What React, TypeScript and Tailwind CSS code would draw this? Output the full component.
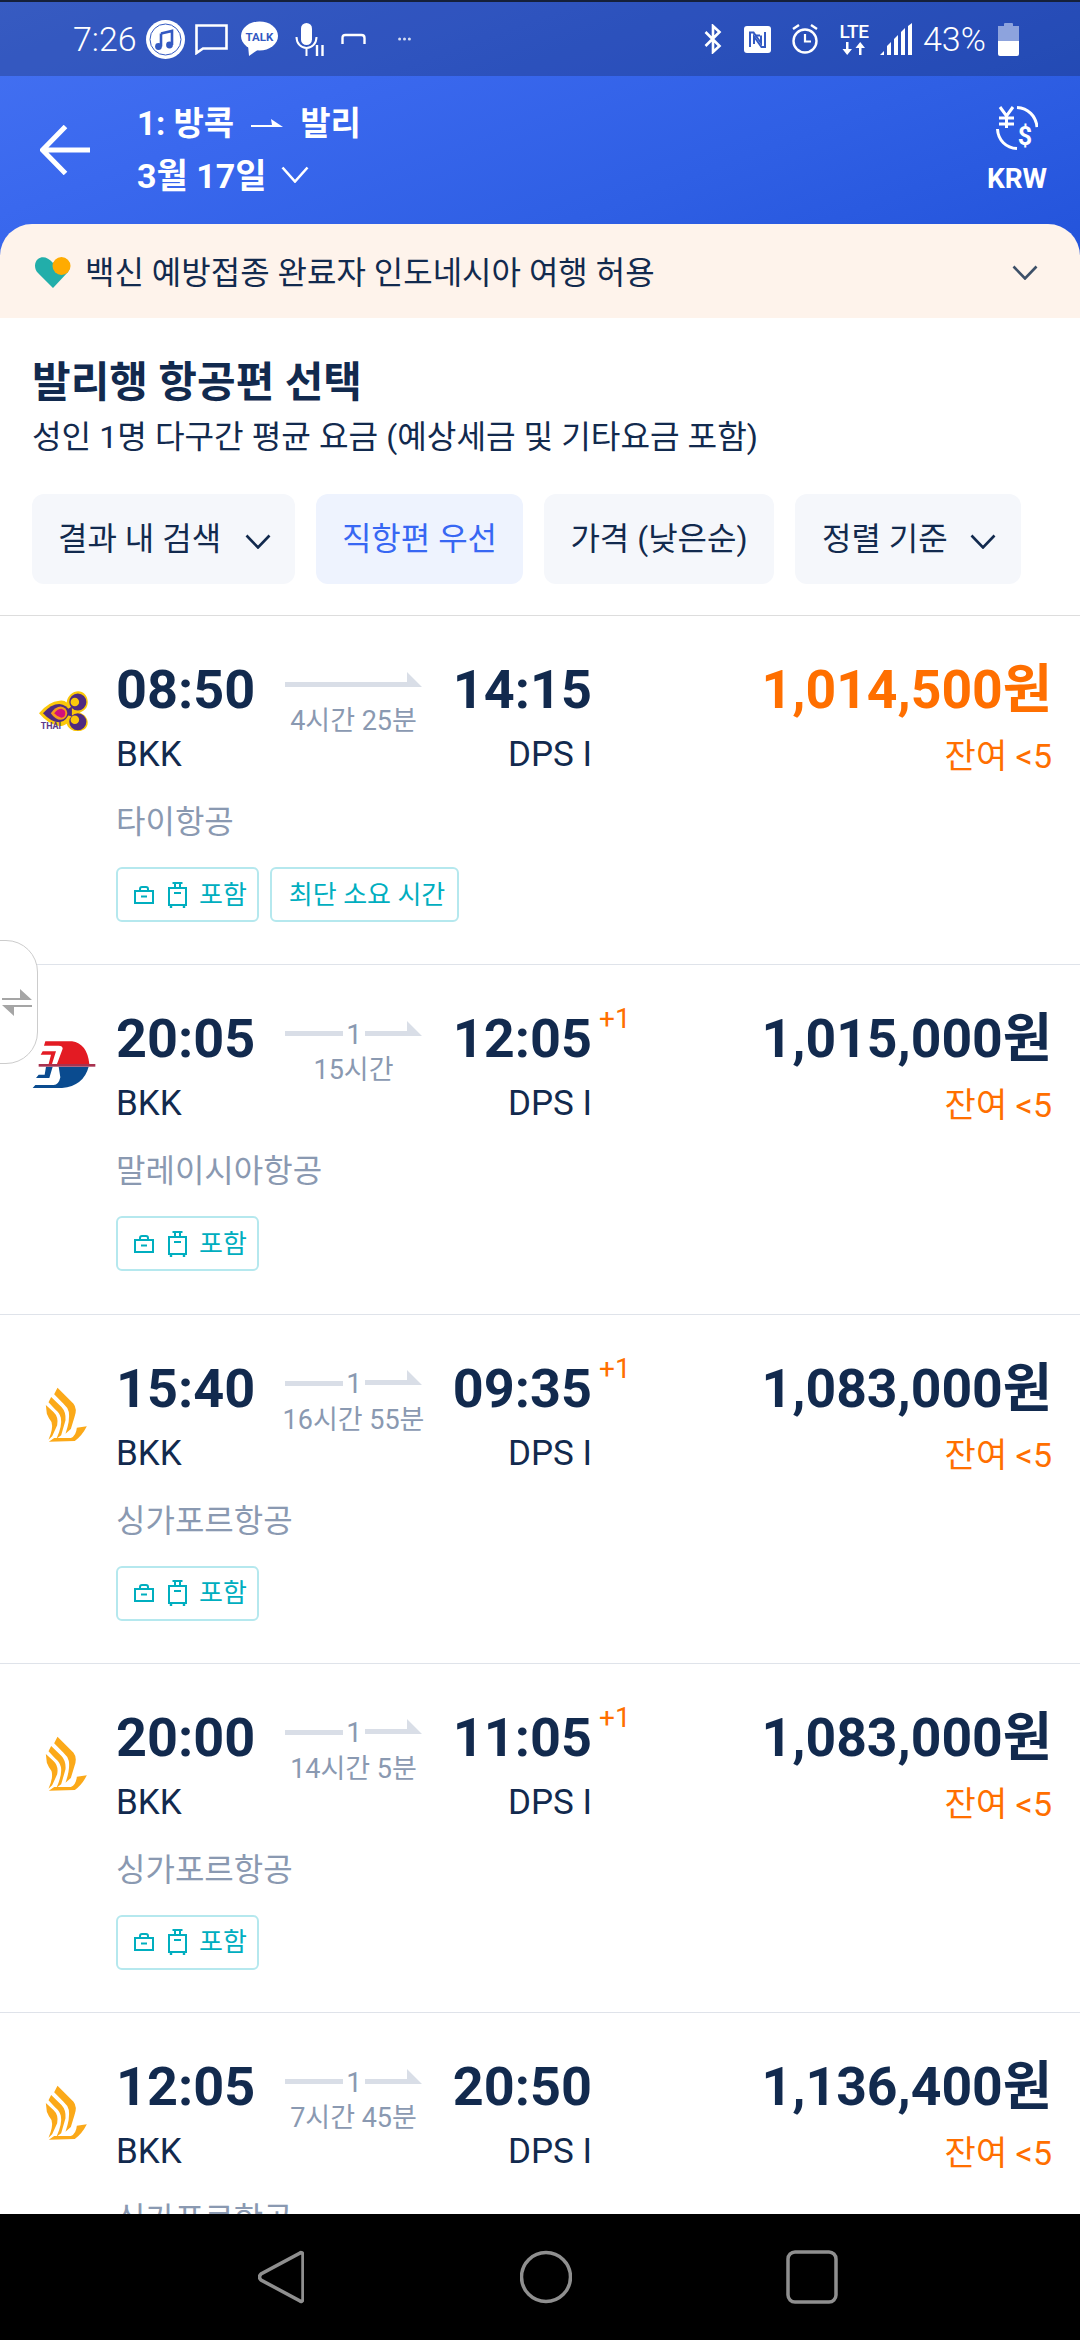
import React from "react";

const Chevron = ({ w = 26, h = 14, color = "#fff", sw = 2.6 }: { w?: number; h?: number; color?: string; sw?: number }) => (
  <svg width={w} height={h} viewBox={`0 0 ${w} ${h}`} fill="none">
    <path d={`M1.5 1.5L${w / 2} ${h - 1.5}L${w - 1.5} 1.5`} stroke={color} strokeWidth={sw} />
  </svg>
);

const Music = () => (
  <svg width="39" height="39" viewBox="0 0 39 39" className="ml-[10px]">
    <circle cx="19.5" cy="19.5" r="19.5" fill="#fff" />
    <circle cx="19.5" cy="19.5" r="15.5" fill="none" stroke="#3359c2" strokeWidth="1" />
    <path d="M15 13.5l11-2.5v14" fill="none" stroke="#3359c2" strokeWidth="2.6" />
    <path d="M15 13.5v13" stroke="#3359c2" strokeWidth="2.6" />
    <circle cx="12.5" cy="26.5" r="3.4" fill="#3359c2" />
    <circle cx="23.5" cy="25" r="3.4" fill="#3359c2" />
  </svg>
);

const Msg = () => (
  <svg width="33" height="31" viewBox="0 0 33 31" className="ml-[10px]" fill="none">
    <path d="M1.5 1.5h30v23H8l-6.5 4.5z" stroke="#fff" strokeWidth="2.6" />
  </svg>
);

const Talk = () => (
  <svg width="37" height="36" viewBox="0 0 37 36" className="ml-[13px]">
    <ellipse cx="18.5" cy="15" rx="18.5" ry="14.5" fill="#fff" />
    <path d="M7 24l1 11 10-7z" fill="#fff" />
    <text x="18.5" y="19.5" textAnchor="middle" fontSize="11.5" fontWeight="700" fill="#3359c2" fontFamily="Roboto">TALK</text>
  </svg>
);

const Mic = () => (
  <svg width="29" height="33" viewBox="0 0 29 33" className="ml-[17px]" fill="none">
    <rect x="6" y="0" width="11" height="22" rx="5.5" fill="#fff" />
    <path d="M1.5 14c0 6.5 4.5 11 10 11s10-4.5 10-11M11.5 25v8" stroke="#fff" strokeWidth="2" />
    <path d="M22 22v11M27.5 22v11" stroke="#fff" strokeWidth="2.4" />
  </svg>
);

const Cast = () => (
  <svg width="25" height="12" viewBox="0 0 25 12" className="ml-[17px]" fill="none">
    <path d="M1.5 11V5q0-3 3-3h16q3 0 3 3v6" stroke="#fff" strokeWidth="2.4" />
  </svg>
);

const Dots = () => (
  <svg width="13" height="4" viewBox="0 0 13 4" className="ml-[32px]" fill="#fff" opacity="0.8">
    <circle cx="1.6" cy="2" r="1.5" />
    <circle cx="6.5" cy="2" r="1.5" />
    <circle cx="11.4" cy="2" r="1.5" />
  </svg>
);

const Bt = () => (
  <svg width="18" height="30" viewBox="0 0 18 30" fill="none">
    <path d="M1.5 8l14 14-6.5 6V2l6.5 6-14 14" stroke="#fff" strokeWidth="2.6" />
  </svg>
);

const Nfc = () => (
  <svg width="27" height="27" viewBox="0 0 27 27" className="ml-[22px]">
    <rect width="27" height="27" rx="3" fill="#fff" />
    <path d="M6 21V6.5h3.5L17 17V9.5" fill="none" stroke="#3359c2" strokeWidth="2" />
    <path d="M11 9.5h5M21 6v15h-3.5L10 10.5V18" fill="none" stroke="#3359c2" strokeWidth="2" />
  </svg>
);

const Alarm = () => (
  <svg width="26" height="30" viewBox="0 0 26 30" className="ml-[21px]" fill="none">
    <circle cx="13" cy="17" r="11.5" stroke="#fff" strokeWidth="2.4" />
    <path d="M13 10v7.5h6" stroke="#fff" strokeWidth="2.2" />
    <path d="M1 5l6-4M25 5l-6-4" stroke="#fff" strokeWidth="2.4" />
  </svg>
);

const Lte = () => (
  <div className="ml-[21px] flex h-[31px] w-[30px] flex-col items-center">
    <span className="h-[15px] text-[19px] font-medium leading-[15px] tracking-[-0.5px] text-white">LTE</span>
    <svg width="26" height="13" viewBox="0 0 26 13" className="mt-[3px]" fill="#fff">
      <path d="M5 0h2.5v7H11l-4.8 6L1.5 7H5zM18 13h2.5V6H24l-4.8-6-4.7 6H18z" />
    </svg>
  </div>
);

const Signal = () => (
  <svg width="33" height="32" viewBox="0 0 33 32" className="ml-[11px]" fill="#fff">
    <path d="M0 32l4-4v4zM7 32v-9l4-4v13zM14 32V16l4-4v20zM21 32V9l4-4v27zM28 32V3l4-3v32z" />
  </svg>
);

const Battery = () => (
  <div className="ml-[13px] flex h-[33px] w-[21px] flex-col items-center">
    <div className="h-[3px] w-[9px] rounded-t-[1px] bg-[#8da3dd]" />
    <div className="h-[15px] w-full bg-[#8da3dd]" />
    <div className="h-[15px] w-full rounded-b-[2px] bg-white" />
  </div>
);

const Currency = () => (
  <svg width="42" height="44" viewBox="0 0 42 44" fill="none">
    <path d="M21 1.5C32 2 40 10 41 21" stroke="#fff" strokeWidth="3" />
    <path d="M1.5 23C2 34 10 42 21 42.5" stroke="#fff" strokeWidth="3" />
    <path d="M4 1l6.5 9L17 1M3 12h15M3 18h15M10.5 10v12" stroke="#fff" strokeWidth="3" />
    <text x="29" y="39" textAnchor="middle" fontSize="25" fontWeight="700" fill="#fff" fontFamily="Roboto">$</text>
  </svg>
);

const Heart = () => (
  <svg width="36" height="31" viewBox="0 0 36 31">
    <path d="M18 31L3 16C-1 12-1 5 3 2c4-3 10-2 15 4 4-5 9-6 13-4 5 3 5 9 2 13z" fill="#22aeaa" />
    <circle cx="26.5" cy="9" r="9" fill="#ffab00" />
  </svg>
);

const Thai = () => (
  <svg width="50" height="41" viewBox="28 28 152 124">
    <path d="M28 98Q58 62 90 60Q106 58 112 66C115 40 140 26 158 34C182 45 182 82 160 92L152 97C178 105 184 135 165 148C145 160 118 150 112 130C102 138 92 138 85 136Q55 130 28 98Z" fill="#fbc80a" />
    <path d="M40 98Q65 70 90 70Q112 72 122 92Q112 124 90 126Q65 125 40 98Z" fill="#4f2a80" />
    <circle cx="146" cy="64" r="26" fill="#4f2a80" />
    <circle cx="146" cy="124" r="26" fill="#4f2a80" />
    <path d="M112 88L128 78L128 108L112 104Z" fill="#4f2a80" />
    <circle cx="137" cy="64" r="13" fill="#fbc80a" />
    <circle cx="137" cy="118" r="13" fill="#fbc80a" />
    <path d="M64 98Q78 78 94 78Q112 80 114 98Q112 116 94 118Q78 118 64 98Z" fill="#f59a1a" />
    <path d="M74 98Q85 85 96 85Q108 88 108 98Q108 110 96 112Q85 110 74 98Z" fill="#d4107a" />
    <text x="33" y="146" fontSize="27" fontWeight="700" fill="#5d3a8a" fontFamily="Roboto">THAI</text>
  </svg>
);

const Malaysia = () => (
  <svg width="64" height="50" viewBox="20 28 192 150">
    <path d="M60 32H140Q185 38 192 100H95L112 54Q112 45 100 45H56Z" fill="#e31b23" />
    <path d="M52 62H92L80 100H70L77 72H46Z" fill="#e31b23" />
    <path d="M100 108H190Q175 165 110 172H22L30 163H85Q100 163 105 140Z" fill="#0a4b8f" />
    <path d="M62 108H82L72 142H32L40 132H58Z" fill="#0a4b8f" />
    <rect x="40" y="100" width="170" height="8" fill="#a8324f" />
  </svg>
);

const Singapore = () => (
  <svg width="42" height="55" viewBox="45 50 125 165">
    <path d="M82 52L130 100Q142 115 133 140L122 176L106 190Q120 150 116 125Q112 110 100 100L72 72Z" fill="#fba919" />
    <path d="M63 80L94 110Q108 125 106 150L93 195L79 205Q97 165 92 142Q87 125 76 118L55 96Z" fill="#fba919" />
    <path d="M47 104L70 125Q86 140 81 165L66 198L55 208Q70 175 64 155Q56 145 50 130Z" fill="#fba919" />
    <path d="M56 214L72 203H122Q138 196 140 172L170 168Q156 196 134 212Z" fill="#fba919" />
  </svg>
);

const Bag = () => (
  <svg width="20" height="18" viewBox="0 0 20 18" fill="none">
    <rect x="1" y="5" width="18" height="12" stroke="#00aebf" strokeWidth="2" />
    <path d="M6 5V3q0-2 2-2h4q2 0 2 2v2" stroke="#00aebf" strokeWidth="2" />
    <path d="M7 10.5h6" stroke="#00aebf" strokeWidth="2" />
  </svg>
);

const Suitcase = () => (
  <svg width="19" height="26" viewBox="0 0 19 26" fill="none" className="ml-[14px]">
    <rect x="1" y="6" width="17" height="17" stroke="#00aebf" strokeWidth="2" />
    <path d="M4.5 1h10M7 1v5M12 1v5" stroke="#00aebf" strokeWidth="2" />
    <path d="M6 11h7" stroke="#00aebf" strokeWidth="2" />
    <path d="M3 23v3M16 23v3" stroke="#00aebf" strokeWidth="2.4" />
  </svg>
);

const tags = "flex h-[55px] items-center rounded-[6px] border-2 border-[#b5e8ee] text-[26px] leading-[30px] text-[#00aebf]";

type Flight = {
  logo: React.ReactNode;
  logoClass: string;
  from: string;
  to: string;
  plus?: boolean;
  stop: boolean;
  dur: string;
  price: string;
  best?: boolean;
  air: string;
};

const flights: Flight[] = [
  { logo: <Thai />, logoClass: "ml-[8px] mt-[30px]", from: "08:50", to: "14:15", stop: false, dur: "4시간 25분", price: "1,014,500원", best: true, air: "타이항공" },
  { logo: <Malaysia />, logoClass: "ml-[1px] mt-[31px]", from: "20:05", to: "12:05", plus: true, stop: true, dur: "15시간", price: "1,015,000원", air: "말레이시아항공" },
  { logo: <Singapore />, logoClass: "ml-[14px] mt-[28px]", from: "15:40", to: "09:35", plus: true, stop: true, dur: "16시간 55분", price: "1,083,000원", air: "싱가포르항공" },
  { logo: <Singapore />, logoClass: "ml-[14px] mt-[28px]", from: "20:00", to: "11:05", plus: true, stop: true, dur: "14시간 5분", price: "1,083,000원", air: "싱가포르항공" },
  { logo: <Singapore />, logoClass: "ml-[14px] mt-[28px]", from: "12:05", to: "20:50", stop: true, dur: "7시간 45분", price: "1,136,400원", air: "싱가포르항공" },
];

const FlightLine = ({ stop }: { stop: boolean }) => (
  <div className="flex h-[26px] w-[137px] shrink-0 items-center">
    {stop ? (
      <>
        <div className="mt-[9px] h-[5px] w-[58px] bg-[#d9dee7]" />
        <span className="mt-[11px] w-[22px] text-center text-[28px] leading-[26px] text-[#8a99b1]">1</span>
        <svg width="57" height="16" viewBox="0 0 57 16" className="mb-[1px]">
          <path d="M0 10h42V0l15 15H0z" fill="#d9dee7" />
        </svg>
      </>
    ) : (
      <svg width="137" height="16" viewBox="0 0 137 16" className="mb-[1px]">
        <path d="M0 10h122V0l15 15H0z" fill="#d9dee7" />
      </svg>
    )}
  </div>
);

const Row = ({ f }: { f: Flight }) => (
  <div className="flex h-[349.3px] shrink-0 border-b border-[#dfe3ea] pl-[31px] pr-[28px] pt-[44px]">
    <div className="w-[85px] shrink-0">
      <div className={f.logoClass}>{f.logo}</div>
    </div>
    <div className="w-[476px] shrink-0">
      <div className="grid grid-cols-[169px_137px_170px]">
        <div className="text-[54px] font-bold leading-[60px] text-[#122a4e]">{f.from}</div>
        <div className="flex h-[60px] flex-col items-center pt-[7px]">
          <FlightLine stop={f.stop} />
          <div className="mt-[13px] shrink-0 whitespace-nowrap text-[27px] leading-[30px] text-[#8a99b1]">{f.dur}</div>
        </div>
        <div className="relative text-right text-[54px] font-bold leading-[60px] text-[#122a4e]">
          {f.to}
          {f.plus && (
            <span className="absolute left-[177px] top-[-5px] text-[28px] font-normal leading-[30px] text-[#ff6f00]">+1</span>
          )}
        </div>
      </div>
      <div className="mt-[15px] flex justify-between text-[35px] leading-[40px] text-[#122a4e]">
        <span>BKK</span>
        <span>DPS I</span>
      </div>
      <div className="mt-[27px] text-[32px] leading-[40px] text-[#8a99b1]">{f.air}</div>
      <div className="mt-[25px] flex gap-[11px]">
        <div className={`${tags} pl-[16px] pr-[10px]`}>
          <Bag />
          <Suitcase />
          <span className="ml-[12px]">포함</span>
        </div>
        {f.best && <div className={`${tags} pl-[17px] pr-[12px]`}>최단 소요 시간</div>}
      </div>
    </div>
    <div className="flex flex-1 flex-col items-end">
      <div className={`whitespace-nowrap text-[53.5px] font-bold leading-[60px] ${f.best ? "text-[#ff6f00]" : "text-[#122a4e]"}`}>
        {f.price}
      </div>
      <div className="mt-[16px] whitespace-nowrap text-[34px] leading-[40px] text-[#ff6f00]">잔여 &lt;5</div>
    </div>
  </div>
);

export default function App() {
  return (
    <div className="relative flex h-[2340px] w-[1080px] flex-col overflow-hidden bg-white font-['Roboto','Noto_Sans_CJK_KR',sans-serif]">
      <div className="shrink-0 bg-[linear-gradient(160deg,#4572f2_0%,#3a68ee_30%,#2f5fe4_60%,#2050d8_100%)]">
        <div className="flex h-[76px] items-center border-t-2 border-[#15203a] bg-black/20 pl-[73px] pr-[61px] text-[34px] font-light text-white">
          <span className="w-[63px] whitespace-nowrap">7:26</span>
          <Music />
          <Msg />
          <Talk />
          <Mic />
          <Cast />
          <Dots />
          <div className="ml-auto flex items-center">
            <Bt />
            <Nfc />
            <Alarm />
            <Lte />
            <Signal />
            <span className="ml-[10px] w-[62px] whitespace-nowrap">43%</span>
            <Battery />
          </div>
        </div>
        <div className="flex h-[148px] items-center pl-[40px] pr-[32px] text-white">
          <svg width="50" height="50" viewBox="0 0 50 50" fill="none">
            <path d="M25.5 1.5L2.5 25l23 23.5M3 25h47" stroke="#fff" strokeWidth="5" />
          </svg>
          <div className="ml-[47px] font-bold">
            <div className="flex h-[52px] items-center text-[33px] leading-[40px]">
              <span>1: 방콕</span>
              <svg width="32" height="10" viewBox="0 0 32 10" className="ml-[17px] mr-[17px]">
                <path d="M0 6h21l-1-6 12 8H0z" fill="#fff" />
              </svg>
              <span>발리</span>
            </div>
            <div className="flex h-[52px] items-center text-[34px] leading-[40px]">
              <span>3월 17일</span>
              <span className="ml-[14px] mt-[-4px]">
                <Chevron w={28} h={17} />
              </span>
            </div>
          </div>
          <div className="ml-auto flex w-[62px] flex-col items-center">
            <Currency />
            <span className="mt-[13px] text-[28px] font-bold leading-[32px]">KRW</span>
          </div>
        </div>
        <div className="flex h-[94px] items-center rounded-t-[32px] bg-[#fef3eb] pl-[35px] pr-[42px] pt-[3px]">
          <Heart />
          <span className="ml-[14px] text-[32px] leading-[40px] text-[#122a4e]">백신 예방접종 완료자 인도네시아 여행 허용</span>
          <span className="ml-auto">
            <Chevron w={26} h={15} color="#3d5068" />
          </span>
        </div>
      </div>

      <div className="flex-1 overflow-hidden">
        <div className="px-[32px] pt-[40px]">
          <h1 className="text-[42px] font-bold leading-[50px] text-[#122a4e]">발리행 항공편 선택</h1>
          <p className="mt-[9px] text-[32.2px] leading-[40px] text-[#122a4e]">성인 1명 다구간 평균 요금 (예상세금 및 기타요금 포함)</p>
        </div>
        <div className="mt-[37px] flex gap-[21px] px-[32px] text-[32px] leading-[40px] text-[#122a4e]">
          <div className="flex h-[90px] w-[263px] items-center rounded-[12px] bg-[#f5f7fb] pl-[26px]">
            <span>결과 내 검색</span>
            <span className="ml-[24px] mt-[4px]">
              <Chevron w={26} h={15} color="#122a4e" />
            </span>
          </div>
          <div className="flex h-[90px] w-[207px] items-center justify-center rounded-[12px] bg-[#eef3fe] text-[#3767f3]">직항편 우선</div>
          <div className="flex h-[90px] w-[230px] items-center justify-center rounded-[12px] bg-[#f5f7fb]">가격 (낮은순)</div>
          <div className="flex h-[90px] w-[226px] items-center rounded-[12px] bg-[#f5f7fb] pl-[27px]">
            <span>정렬 기준</span>
            <span className="ml-[22px] mt-[4px]">
              <Chevron w={26} h={15} color="#122a4e" />
            </span>
          </div>
        </div>
        <div className="mt-[31px] h-px bg-[#dddddd]" />
        {flights.map((f, i) => (
          <Row key={i} f={f} />
        ))}
      </div>

      <div className="flex h-[126px] shrink-0 items-center bg-black pl-[258px] pb-[1px]">
        <svg width="46" height="54" viewBox="0 0 46 54" fill="none">
          <path d="M42 3c1-1 3 0 3 2v44c0 2-2 3-3 2L3 30c-2-2-2-4 0-6z" stroke="#8f8f8f" strokeWidth="3.5" />
        </svg>
        <svg width="52" height="54" viewBox="0 0 52 54" fill="none" className="ml-[216px]">
          <circle cx="26" cy="27" r="24.5" stroke="#8f8f8f" strokeWidth="3.5" />
        </svg>
        <svg width="52" height="54" viewBox="0 0 52 54" fill="none" className="ml-[214px]">
          <rect x="2" y="2" width="48" height="50" rx="7" stroke="#8f8f8f" strokeWidth="3.5" />
        </svg>
      </div>

      <div className="absolute left-[-2px] top-[940px] flex h-[124px] w-[40px] items-center justify-center rounded-r-[32px] border border-[#cccccc] bg-white pr-[3px]">
        <svg width="30" height="27" viewBox="0 0 30 27" fill="#a5a5a5">
          <path d="M0 9h18V0l12 11H0zM30 18H12v9L0 16h30z" />
        </svg>
      </div>
    </div>
  );
}
